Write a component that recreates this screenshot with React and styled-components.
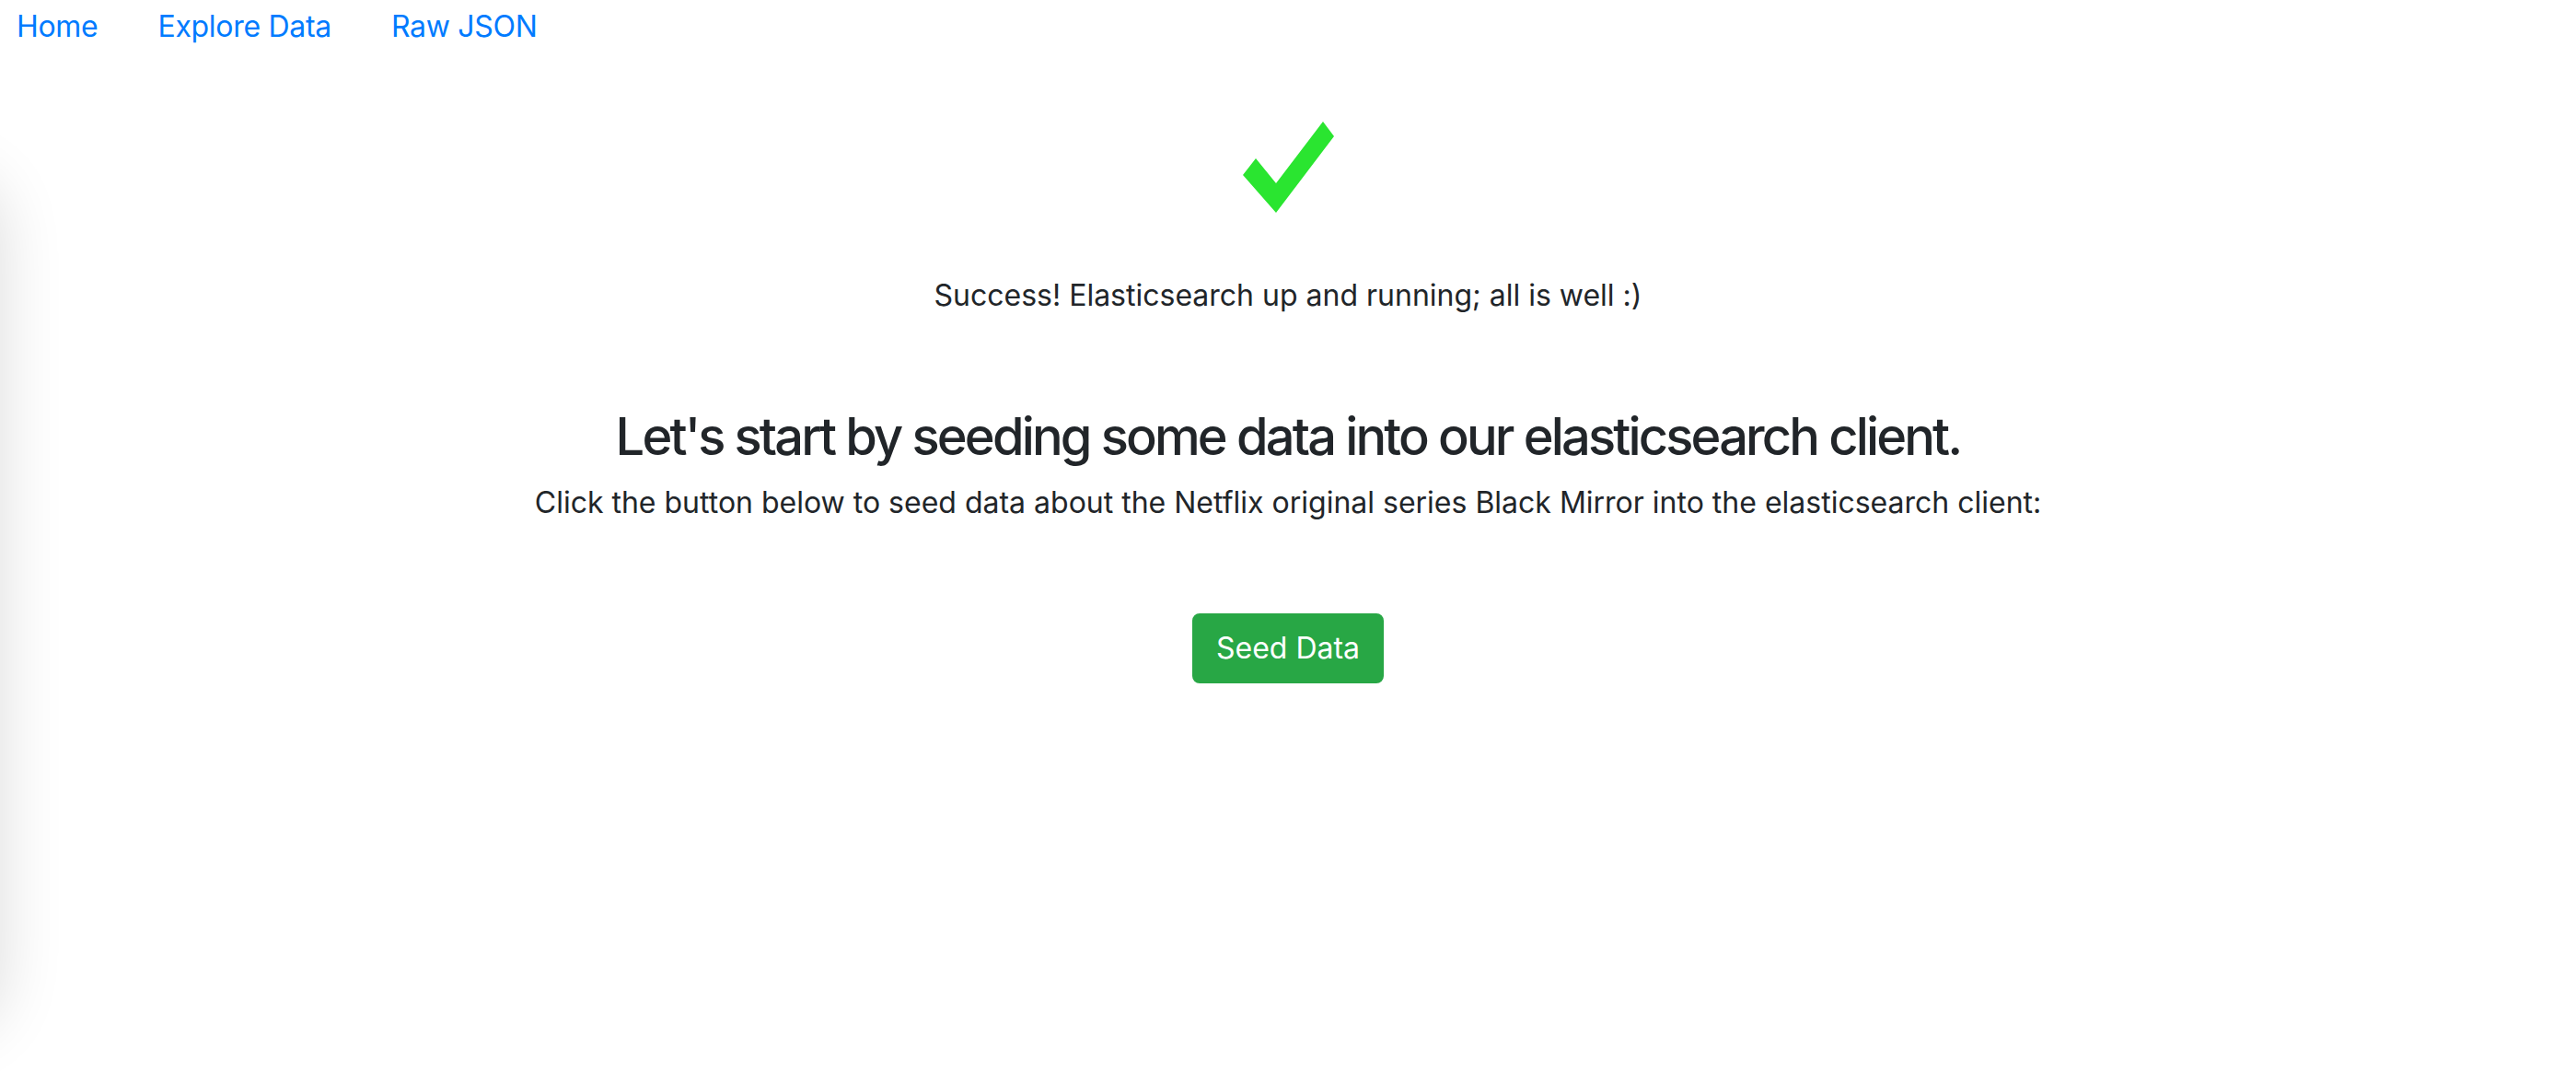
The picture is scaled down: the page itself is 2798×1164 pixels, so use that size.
import React from "react";
import styled, { createGlobalStyle } from "styled-components";

const GlobalStyle = createGlobalStyle`
  html, body {
    margin: 0;
    padding: 0;
    background: #fff;
  }
  body {
    font-family: Inter, "Noto Sans", "Liberation Sans", sans-serif;
    color: #212529;
  }
`;

const Page = styled.div`
  min-height: 1164px;
  display: flex;
  flex-direction: column;
`;

const Nav = styled.nav`
  display: flex;
  gap: 65px;
  padding: 5px 0 0 18px;
`;

const NavLink = styled.a`
  font-size: 32px;
  line-height: 48px;
  letter-spacing: -0.3px;
  color: #007bff;
  text-decoration: none;
  cursor: pointer;
`;

const Main = styled.main`
  display: flex;
  flex-direction: column;
  align-items: center;
  text-align: center;
  padding-top: 79px;
`;

const Check = styled.svg`
  width: 100px;
  height: 100px;
  display: block;
`;

const Status = styled.p`
  margin: 65px 0 0;
  font-size: 32px;
  line-height: 48px;
`;

const Heading = styled.h3`
  margin: 96px 0 0;
  font-size: 56px;
  font-weight: 500;
  line-height: 67px;
  letter-spacing: -2.85px;
`;

const Lead = styled.p`
  margin: 14px 0 0;
  font-size: 32px;
  line-height: 48px;
`;

const SeedButton = styled.button`
  margin-top: 96px;
  font-family: inherit;
  font-size: 32px;
  line-height: 48px;
  padding: 12px 24px;
  color: #fff;
  background: #28a745;
  border: 2px solid #28a745;
  border-radius: 8px;
  cursor: pointer;
`;

const EdgeShadow = styled.div`
  position: fixed;
  left: -120px;
  top: 190px;
  width: 120px;
  height: 930px;
  border-radius: 60px;
  box-shadow: 0 0 70px rgba(0, 0, 0, 0.14);
  pointer-events: none;
`;

export default function App() {
  return (
    <>
      <GlobalStyle />
      <EdgeShadow />
      <Page>
        <Nav>
          <NavLink>Home</NavLink>
          <NavLink>Explore Data</NavLink>
          <NavLink>Raw JSON</NavLink>
        </Nav>
        <Main>
          <Check viewBox="0 0 100 100">
            <polygon
              points="1,58 15,40 37,67 88,0 100,16 37,99"
              fill="#2ae530"
            />
          </Check>
          <Status>Success! Elasticsearch up and running; all is well :)</Status>
          <Heading>Let's start by seeding some data into our elasticsearch client.</Heading>
          <Lead>
            Click the button below to seed data about the Netflix original series Black Mirror into the elasticsearch client:
          </Lead>
          <SeedButton>Seed Data</SeedButton>
        </Main>
      </Page>
    </>
  );
}
